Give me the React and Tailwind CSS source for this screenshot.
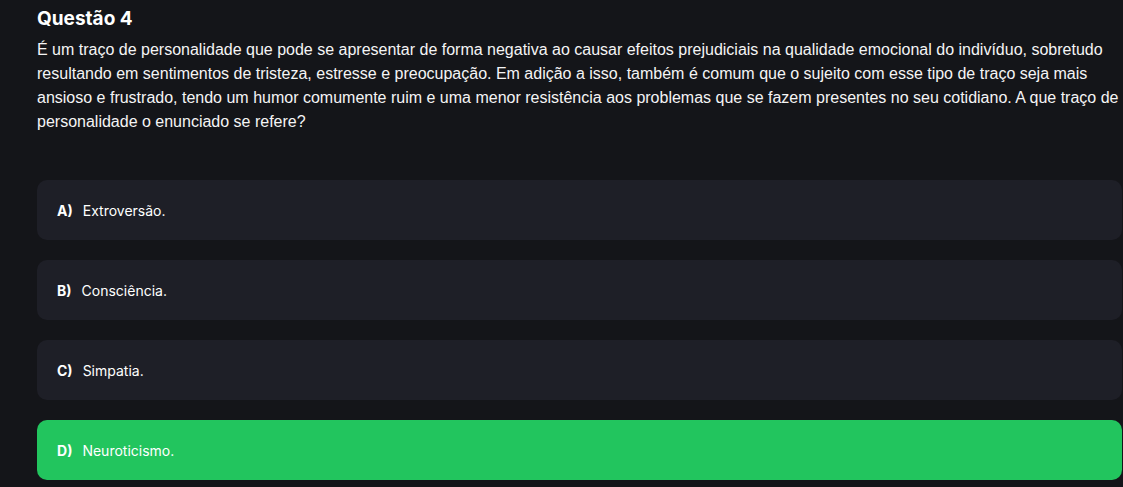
import React from "react";

const options = [
  { letter: "A", text: "Extroversão." },
  { letter: "B", text: "Consciência." },
  { letter: "C", text: "Simpatia." },
  { letter: "D", text: "Neuroticismo.", correct: true },
];

const App = () => {
  return (
    <div className="min-h-screen bg-[#141519] pl-[37px] pr-px pt-[5px] text-white">
      {/* Question header */}
      <h2 className="text-[19px] font-bold leading-[28px] font-['Inter',sans-serif]">
        Questão 4
      </h2>
      <p className="mt-[5px] text-[16px] leading-[24px] text-[#f4f4f5] font-['Liberation_Sans',Arial,sans-serif]">
        É um traço de personalidade que pode se apresentar de forma negativa ao
        causar efeitos prejudiciais na qualidade emocional do indivíduo,
        sobretudo resultando em sentimentos de tristeza, estresse e
        preocupação. Em adição a isso, também é comum que o sujeito com esse
        tipo de traço seja mais ansioso e frustrado, tendo um humor comumente
        ruim e uma menor resistência aos problemas que se fazem presentes no
        seu cotidiano. A que traço de personalidade o enunciado se refere?
      </p>

      {/* Options */}
      <div className="mt-[46px] flex flex-col gap-[20px]">
        {options.map((opt) => (
          <div
            key={opt.letter}
            className={`flex h-[60px] items-center gap-[10px] rounded-[10px] px-[20px] font-['Inter',sans-serif] text-[14px] ${
              opt.correct ? "bg-[#22c55e]" : "bg-[#1e1f27]"
            }`}
          >
            <span className="font-bold">{opt.letter})</span>
            <span>{opt.text}</span>
          </div>
        ))}
      </div>
    </div>
  );
};

export default App;
